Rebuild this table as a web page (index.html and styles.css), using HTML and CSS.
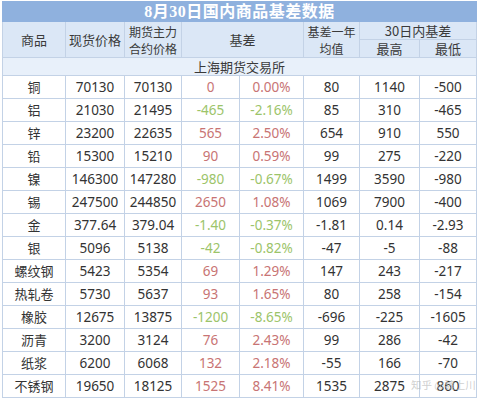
FILE: index.html
```html
<!DOCTYPE html>
<html lang="zh">
<head>
<meta charset="utf-8">
<link rel="stylesheet" href="styles.css">
</head>
<body>
<div class="wrap">
<table class="grid">
  <colgroup>
    <col style="width:63px"><col style="width:59px"><col style="width:57px"><col style="width:58px">
    <col style="width:64px"><col style="width:56px"><col style="width:60px"><col style="width:57px">
  </colgroup>
  <thead>
    <tr class="title"><th colspan="8">8月30日国内商品基差数据</th></tr>
    <tr class="h1">
      <th rowspan="2">商品</th>
      <th rowspan="2">现货价格</th>
      <th rowspan="2" class="two"><div>期货主力</div><div>合约价格</div></th>
      <th rowspan="2" colspan="2">基差</th>
      <th rowspan="2" class="two"><div>基差一年</div><div>均值</div></th>
      <th colspan="2">30日内基差</th>
    </tr>
    <tr class="h2"><th>最高</th><th>最低</th></tr>
    <tr class="sub"><th colspan="8">上海期货交易所</th></tr>
  </thead>
  <tbody>
    <tr><td>铜</td><td>70130</td><td>70130</td><td class="r">0</td><td class="r">0.00%</td><td>80</td><td>1140</td><td>-500</td></tr>
    <tr><td>铝</td><td>21030</td><td>21495</td><td class="g">-465</td><td class="g">-2.16%</td><td>85</td><td>310</td><td>-465</td></tr>
    <tr><td>锌</td><td>23200</td><td>22635</td><td class="r">565</td><td class="r">2.50%</td><td>654</td><td>910</td><td>550</td></tr>
    <tr><td>铅</td><td>15300</td><td>15210</td><td class="r">90</td><td class="r">0.59%</td><td>99</td><td>275</td><td>-220</td></tr>
    <tr><td>镍</td><td>146300</td><td>147280</td><td class="g">-980</td><td class="g">-0.67%</td><td>1499</td><td>3590</td><td>-980</td></tr>
    <tr><td>锡</td><td>247500</td><td>244850</td><td class="r">2650</td><td class="r">1.08%</td><td>1069</td><td>7900</td><td>-400</td></tr>
    <tr><td>金</td><td>377.64</td><td>379.04</td><td class="g">-1.40</td><td class="g">-0.37%</td><td>-1.81</td><td>0.14</td><td>-2.93</td></tr>
    <tr><td>银</td><td>5096</td><td>5138</td><td class="g">-42</td><td class="g">-0.82%</td><td>-47</td><td>-5</td><td>-88</td></tr>
    <tr><td>螺纹钢</td><td>5423</td><td>5354</td><td class="r">69</td><td class="r">1.29%</td><td>147</td><td>243</td><td>-217</td></tr>
    <tr><td>热轧卷</td><td>5730</td><td>5637</td><td class="r">93</td><td class="r">1.65%</td><td>80</td><td>258</td><td>-154</td></tr>
    <tr><td>橡胶</td><td>12675</td><td>13875</td><td class="g">-1200</td><td class="g">-8.65%</td><td>-696</td><td>-225</td><td>-1605</td></tr>
    <tr><td>沥青</td><td>3200</td><td>3124</td><td class="r">76</td><td class="r">2.43%</td><td>99</td><td>286</td><td>-42</td></tr>
    <tr><td>纸浆</td><td>6200</td><td>6068</td><td class="r">132</td><td class="r">2.18%</td><td>-55</td><td>166</td><td>-70</td></tr>
    <tr><td>不锈钢</td><td>19650</td><td>18125</td><td class="r">1525</td><td class="r">8.41%</td><td>1535</td><td>2875</td><td>860</td></tr>
  </tbody>
</table>
<div class="mark">知乎 @魏上川</div>
</div>
</body>
</html>
```

FILE: styles.css
```css
html, body {
  margin: 0;
  padding: 0;
  background: #ffffff;
}
.wrap {
  position: relative;
  width: 478px;
  height: 400px;
  overflow: hidden;
}
.grid {
  margin: 1px 0 0 2px;
  width: 474px;
  table-layout: fixed;
  border-collapse: collapse;
  font-family: "Noto Sans", "Noto Sans CJK SC", sans-serif;
  font-size: 13.5px;
  color: #333333;
}
.grid th, .grid td {
  border: 1px solid #c3d2e6;
  padding: 0;
  text-align: center;
  white-space: nowrap;
  overflow: hidden;
}
.title th {
  height: 19px;
  background: #8fb1de;
  color: #ffffff;
  font-family: "Liberation Serif", "Noto Sans CJK SC", serif;
  font-weight: bold;
  font-size: 16px;
  line-height: 19px;
  letter-spacing: 0.5px;
  border-color: #8fb1de;
}
.h1 th, .h2 th {
  background: #dbe7f6;
  font-weight: normal;
  font-size: 13px;
  color: #3a3a3a;
  height: 17px;
  line-height: 17px;
  font-family: "Noto Sans CJK SC", sans-serif;
}
.h1 th.two {
  font-size: 12px;
  line-height: 17px;
}
.h1 th.two div {
  height: 17px;
  line-height: 17px;
}
.sub th {
  background: #e8f0fa;
  font-weight: normal;
  font-size: 13px;
  height: 17px;
  line-height: 17px;
  color: #3a3a3a;
  font-family: "Noto Sans CJK SC", sans-serif;
}
.grid td {
  height: 22px;
  line-height: 22px;
}
.grid td:first-child {
  font-family: "Noto Sans CJK SC", sans-serif;
  font-size: 13px;
}
.grid td.r {
  color: #c87474;
}
.grid td.g {
  color: #9cc46a;
}
.mark {
  position: absolute;
  left: 411px;
  top: 378px;
  font-family: "Noto Sans CJK SC", sans-serif;
  font-size: 10.5px;
  line-height: 13px;
  color: rgba(185, 185, 185, 0.7);
}
```
